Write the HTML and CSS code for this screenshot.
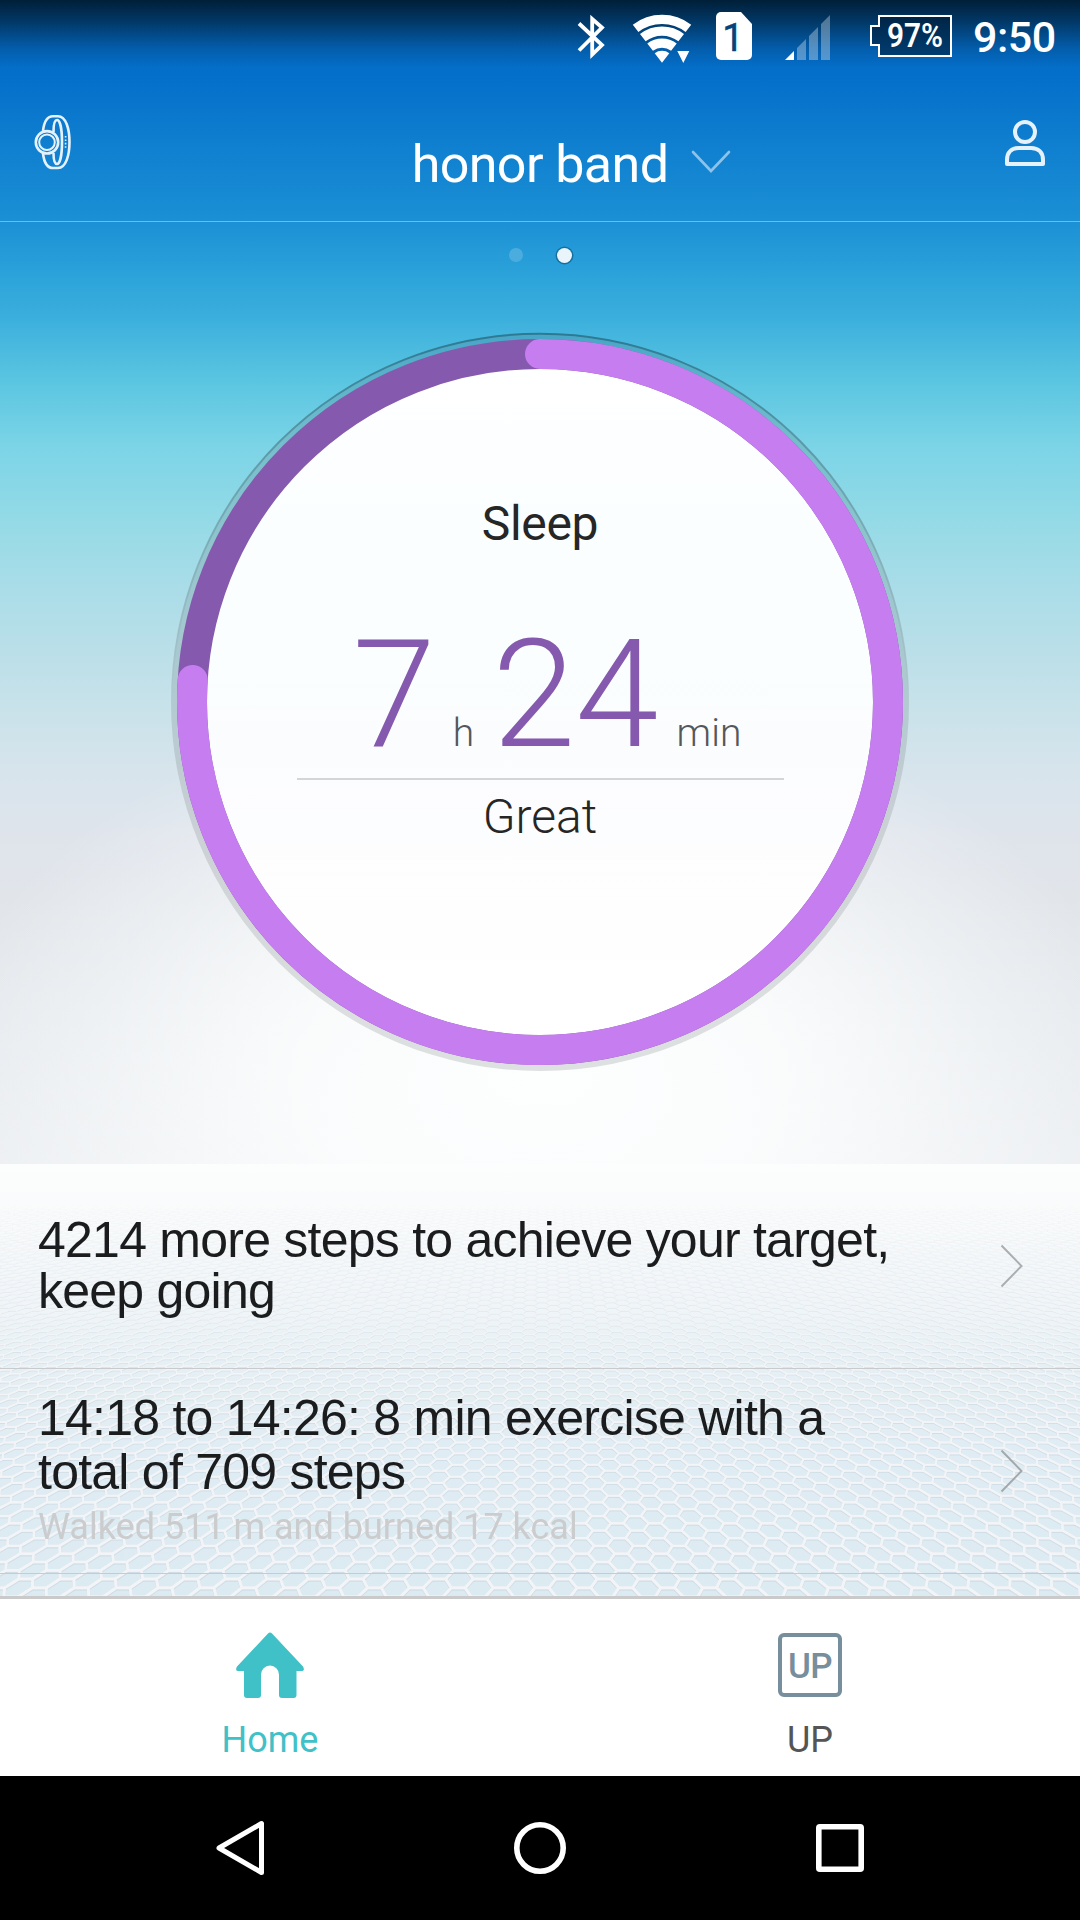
FILE: index.html
```html
<!DOCTYPE html>
<html lang="en">
<head>
    <meta charset="UTF-8">
    <meta name="viewport" content="width=device-width, initial-scale=1.0">
    <title>honor band</title>
    <link rel="stylesheet" href="styles.css">
</head>
<body>
    <div class="phone">
        <div class="top">
            <div class="status-bar">
                <svg class="bluetooth" width="30" height="75" viewBox="0 0 30 75">
                    <path d="M3 23.500L26 45 16.200 54.500V19L26 27.500 3 50.500" fill="none" stroke="#fff" stroke-width="3.800"/>
                </svg>
                <svg class="wifi" width="60" height="75" viewBox="0 0 60 75">
                    <g fill="none" stroke="#fff" stroke-width="9.200">
                        <path d="M3.600 28.400A43.300 43.300 0 0 1 56.400 28.400"/>
                        <path d="M10.800 37.700A31.500 31.500 0 0 1 49.200 37.700"/>
                        <path d="M18.100 47.200A19.500 19.500 0 0 1 41.900 47.200"/>
                    </g>
                    <path d="M30 62.700L22.700 53.200A12 12 0 0 1 37.300 53.200ZM45.300 51H57.300L51.300 63Z" fill="#fff"/>
                </svg>
                <svg class="sim" width="36" height="75" viewBox="0 0 36 75">
                    <path d="M5 12H25L36 24V55a5 5 0 0 1-5 5H5a5 5 0 0 1-5-5V17a5 5 0 0 1 5-5Z" fill="#fff"/>
                    <text x="17" y="51" text-anchor="middle" class="sim-text">1</text>
                </svg>
                <svg class="signal" width="46" height="75" viewBox="0 0 46 75">
                    <path d="M0 60L9 51V60Z" fill="#fff"/>
                    <path d="M12 60V48L21 39V60ZM24 60V36L33 27V60ZM36 60V24L45 15V60Z" fill="#fff" opacity=".32"/>
                </svg>
                <svg class="battery" width="84" height="75" viewBox="0 0 84 75">
                    <path d="M10 16H82V56H10V45H2V26H10Z" fill="#001b35" fill-opacity=".55" stroke="#fff" stroke-width="2"/>
                    <text x="46" y="46.500" text-anchor="middle" textLength="56" lengthAdjust="spacingAndGlyphs" class="battery-text">97%</text>
                </svg>
                <span class="clock">9:50</span>
            </div>

            <div class="header">
                <svg class="watch" width="40" height="56" viewBox="0 0 40 56">
                    <g fill="none" stroke="#e6f2fb" stroke-width="2.600">
                        <circle cx="14" cy="28.300" r="11.200"/>
                        <circle cx="14" cy="28.300" r="7.800" stroke-width="2"/>
                        <path d="M10 17C11 8 14 2.200 20 2.200h5C33 2.200 36.500 15 36.500 28S33 54 25 54h-5C14 54 11 48 10 39.500"/>
                        <path d="M20.500 18C20.500 9 22 6 24 6c3 0 5 9 5 22S27 50 24 50c-2 0-3.500-2-3.500-11"/>
                    </g>
                    <path d="M32.600 22v13" stroke="#e6f2fb" stroke-width="1.600" stroke-dasharray="1.600 1.800"/>
                </svg>
                <h1>honor band</h1>
                <div class="header-right">
                    <svg class="arrow-down" width="42" height="26" viewBox="0 0 42 26">
                        <path d="M3 3L21 22 39 3" fill="none" stroke="#8dc3ea" stroke-width="2.600" stroke-linecap="round"/>
                    </svg>
                    <svg class="user" width="44" height="50" viewBox="0 0 44 50">
                        <g fill="none" stroke="#e6f2fb" stroke-width="4" stroke-linejoin="round">
                            <circle cx="22" cy="14" r="10"/>
                            <path d="M4 46V42C4 34 9 30 16 30H28C35 30 40 34 40 42V46Z"/>
                        </g>
                    </svg>
                </div>
            </div>

            <div class="dots">
                <span class="dot"></span>
                <span class="dot active"></span>
            </div>

            <div class="gauge">
                <svg class="ring" width="744" height="744" viewBox="0 0 744 744">
                    <defs>
                        <linearGradient id="rim" x1="0" y1="0" x2="0" y2="1">
                            <stop offset="0" stop-color="#1d5a70" stop-opacity=".6"/>
                            <stop offset=".3" stop-color="#50707a" stop-opacity=".25"/>
                            <stop offset=".5" stop-color="#777" stop-opacity="0"/>
                        </linearGradient>
                        <linearGradient id="face" x1="0" y1="0" x2="0" y2="1">
                            <stop offset="0" stop-color="#fff"/>
                            <stop offset=".3" stop-color="#fafeff"/>
                            <stop offset=".45" stop-color="#fafeff"/>
                            <stop offset=".55" stop-color="#fbfcfe"/>
                            <stop offset=".8" stop-color="#fefefe"/>
                            <stop offset="1" stop-color="#fff"/>
                        </linearGradient>
                    </defs>
                    <circle cx="372" cy="372" r="369" fill="#5b6464" fill-opacity=".19"/>
                    <circle cx="372" cy="372" r="368.300" fill="none" stroke="url(#rim)" stroke-width="2"/>
                    <circle cx="372" cy="372" r="348" fill="url(#face)" stroke="#855aae" stroke-width="30"/>
                    <!-- 74% of the sleep target -->
                    <path d="M372 24A348 348 0 1 1 24.700 350" fill="none" stroke="#c67df0" stroke-width="30" stroke-linecap="round"/>
                </svg>
                <div class="gauge-text">
                    <p class="gauge-title">Sleep</p>
                    <p class="time"><b>7</b><span class="hour">h</span><b>24</b><span class="min">min</span></p>
                    <p class="rating">Great</p>
                </div>
            </div>
        </div>

        <div class="list">
            <canvas class="mesh" id="mesh" width="1080" height="432"></canvas>
            <div class="row">
                <div class="row-text">
                    <p class="line">4214 more steps to achieve your target,</p>
                    <p class="line">keep going</p>
                </div>
                <svg width="24" height="44" viewBox="0 0 24 44"><path d="M1.500 1.500L21.500 22 1.500 42.500" fill="none" stroke="#aaaeb0" stroke-width="2"/></svg>
            </div>
            <div class="row second">
                <div class="row-text">
                    <p class="line">14:18 to 14:26: 8 min exercise with a</p>
                    <p class="line">total of 709 steps</p>
                    <p class="detail">Walked 511 m and burned 17 kcal</p>
                </div>
                <svg width="24" height="44" viewBox="0 0 24 44"><path d="M1.500 1.500L21.500 22 1.500 42.500" fill="none" stroke="#a3a8ab" stroke-width="2"/></svg>
            </div>
        </div>

        <div class="tabs">
            <div class="tab home">
                <svg width="68" height="68" viewBox="0 0 68 68">
                    <path d="M32 1.500Q34 -.5 36 1.500L67 34.500Q69.500 39 65 39H60.500V63Q60.500 66 57.500 66H46Q43 66 43 63V42.500A9 9 0 0 0 25 42.500V63Q25 66 22 66H11Q8 66 8 63V39H3Q-1.500 39 1 34.500Z" fill="#40c1c7"/>
                </svg>
                <span>Home</span>
            </div>
            <div class="tab">
                <div class="up-icon">UP</div>
                <span>UP</span>
            </div>
        </div>

        <div class="nav-bar">
            <svg width="52" height="60" viewBox="0 0 52 60"><path d="M47.500 5.500V54.500L5 30Z" fill="none" stroke="#fff" stroke-width="5" stroke-linejoin="round"/></svg>
            <svg width="60" height="60" viewBox="0 0 60 60"><circle cx="30" cy="30" r="23.200" fill="none" stroke="#fff" stroke-width="5.600"/></svg>
            <svg width="52" height="60" viewBox="0 0 52 60"><rect x="4.800" y="8.800" width="42.400" height="42.400" rx="1" fill="none" stroke="#fff" stroke-width="5.600"/></svg>
        </div>
    </div>

    <script src="mesh.js"></script>
</body>
</html>
```
FILE: styles.css
```css
* {
    box-sizing: border-box;
}
body {
    font-family: Roboto, "Liberation Sans", sans-serif;
    margin: 0;
    padding: 0;
    background-color: #000;
}
p, h1 {
    margin: 0;
}
svg {
    display: block;
    flex-shrink: 0;
}
.phone {
    width: 1080px;
    height: 1920px;
    overflow: hidden;
}
.top {
    height: 1164px;
    background:
        linear-gradient(to bottom, rgba(0, 18, 30, 0.85) 0, rgba(0, 18, 30, 0.56) 22px, rgba(0, 18, 30, 0.18) 48px, rgba(0, 18, 30, 0) 68px),
        radial-gradient(ellipse 600px 380px at 540px 1075px, #fdfefe 0%, rgba(253, 254, 254, 0.85) 40%, rgba(253, 254, 254, 0) 100%),
        linear-gradient(to bottom, #0269c6 0, #046fca 75px, #1b90d5 221px, #2da4da 280px, #3aaedc 315px, #5ac5e1 380px, #7bd4e6 445px, #94dae6 520px, #aadde8 590px, #badfe8 650px, #c9e2ea 710px, #d8e4ec 775px, #dfe4ec 832px, #e1e5ea 893px, #e6eaee 1016px, #eceff2 1164px);
}

/* status bar */
.status-bar {
    display: flex;
    height: 75px;
    padding-left: 576px;
}
.wifi {
    margin-left: 26px;
}
.sim {
    margin-left: 24px;
}
.signal {
    margin-left: 33px;
}
.battery {
    margin-left: 38px;
}
.sim-text {
    font-size: 38px;
    fill: #04447b;
    stroke: #04447b;
    stroke-width: 0.5px;
}
.battery-text {
    font-size: 33px;
    font-weight: 600;
    fill: #fff;
}
.clock {
    margin-left: 20px;
    font-size: 43px;
    font-weight: 500;
    letter-spacing: -0.5px;
    line-height: 75px;
    color: #fff;
}

/* header */
.header {
    display: grid;
    grid-template-columns: 1fr auto 1fr;
    height: 147px;
    padding: 0 33px;
    border-bottom: 1px solid #72b9e7;
}
.watch {
    margin-top: 39px;
}
.header h1 {
    font-size: 52px;
    font-weight: 400;
    letter-spacing: -0.6px;
    line-height: 60px;
    padding-top: 60px;
    color: #fff;
}
.header-right {
    display: flex;
    justify-content: space-between;
}
.arrow-down {
    margin: 74px 0 0 22px;
}
.user {
    margin-top: 43px;
}

.dots {
    display: flex;
    justify-content: center;
    gap: 34px;
    height: 111px;
    padding-top: 26px;
}
.dot {
    width: 14px;
    height: 14px;
    border-radius: 50%;
    background-color: #4badde;
}
.dot.active {
    width: 15px;
    height: 15px;
    background-color: #e9f5fb;
    box-shadow: 0 0 0 1.5px #166f9f;
}

/* sleep ring */
.gauge {
    display: grid;
    width: 744px;
    margin: -3px auto 0;
}
.ring, .gauge-text {
    grid-area: 1 / 1;
}
.gauge-text {
    text-align: center;
    color: #262626;
    padding-top: 166px;
}
.gauge-title {
    font-size: 48px;
    letter-spacing: -0.3px;
    line-height: 56px;
}
.time {
    display: flex;
    align-items: baseline;
    width: 487px;
    height: 228px;
    margin: 0 auto;
    padding: 55px 0 0 56px;
    border-bottom: 2px solid #d4d5d8;
    line-height: 176px;
}
.time b {
    font-size: 150px;
    font-weight: 300;
    color: #855aae;
}
.time span {
    font-size: 39px;
    font-weight: 300;
    color: #55575a;
}
.hour {
    margin: 0 18px 0 17px;
}
.min {
    margin-left: 18px;
}
.rating {
    padding-top: 9px;
    font-size: 48px;
    font-weight: 300;
    line-height: 56px;
}

/* messages */
.list {
    position: relative;
    height: 432px;
    background: linear-gradient(to bottom, #fcfdfd 0, #f8fafb 70px, #f0f5f8 140px, #e5eff4 205px, #dfecf3 300px, #dceaf2 432px);
}
.mesh {
    position: absolute;
    top: 0;
    left: 0;
}
.row {
    position: relative;
    display: flex;
    justify-content: space-between;
    align-items: center;
    height: 205px;
    padding: 0 56px 0 38px;
    border-bottom: 1px solid #c8cacb;
}
.row-text {
    align-self: flex-start;
    padding-top: 51px;
}
.line {
    font-family: "Liberation Sans", Arial, sans-serif;
    font-size: 50px;
    letter-spacing: -0.76px;
    line-height: 51px;
    color: #1a1c1d;
    white-space: nowrap;
}
.second .row-text {
    padding-top: 22px;
}
.second .line {
    line-height: 54px;
}
.detail {
    font-size: 36px;
    line-height: 42px;
    padding-top: 7px;
    color: #cbcccd;
}

/* tabs */
.tabs {
    display: flex;
    height: 180px;
    background-color: #fff;
    border-top: 3px solid #cacaca;
}
.tab {
    flex: 1;
    display: flex;
    flex-direction: column;
    align-items: center;
    padding-top: 34px;
    font-size: 36px;
    line-height: 42px;
    color: #555;
}
.tab span {
    margin-top: 20px;
}
.home {
    padding-top: 33px;
    color: #40c1c7;
}
.home span {
    margin-top: 19px;
}
.up-icon {
    width: 64px;
    height: 64px;
    margin-bottom: 2px;
    border: 4px solid #778e9c;
    border-radius: 6px;
    font-size: 35px;
    font-weight: 500;
    letter-spacing: -0.5px;
    line-height: 59px;
    text-align: center;
    color: #778e9c;
}

.nav-bar {
    display: flex;
    justify-content: space-between;
    align-items: center;
    height: 144px;
    padding: 0 214px;
    background-color: #000;
}
```
FILE: mesh.js
```js
// honeycomb floor behind the list, drawn in perspective
const canvas = document.getElementById('mesh');
const ctx = canvas.getContext('2d');

const HORIZON = -209;
const DEPTH = 624;
const COL = 20.65;
const ROW = 0.028;
const HEX = [[-13.8, 0], [-6.9, 0.5], [6.9, 0.5], [13.8, 0], [6.9, -0.5], [-6.9, -0.5]];

function project(x, z) {
    return [542 + x / z, HORIZON + DEPTH / z];
}

function trace(x, z, shift) {
    ctx.beginPath();
    HEX.forEach(([dx, dz]) => {
        const [px, py] = project(x + dx, z + dz * ROW);
        ctx.lineTo(px, py + shift);
    });
    ctx.closePath();
}

function drawMesh(color, alpha, width, shift) {
    for (let r = -2; r < 58; r++) {
        for (let c = -81; c <= 81; c++) {
            const z = 0.986 + r * ROW + (c % 2 ? 0 : ROW / 2);
            const y = HORIZON + DEPTH / z;
            const fade = Math.max(0, Math.min(1, (y - 30) / 190));

            trace(c * COL, z, shift / z);
            ctx.strokeStyle = `rgba(${color}, ${fade * alpha})`;
            ctx.lineWidth = width / Math.pow(z, 1.6);
            ctx.stroke();
        }
    }
}

drawMesh('196, 210, 220', 0.28, 3, 1.2);
drawMesh('243, 245, 247', 0.85, 2.7, 0);
```
